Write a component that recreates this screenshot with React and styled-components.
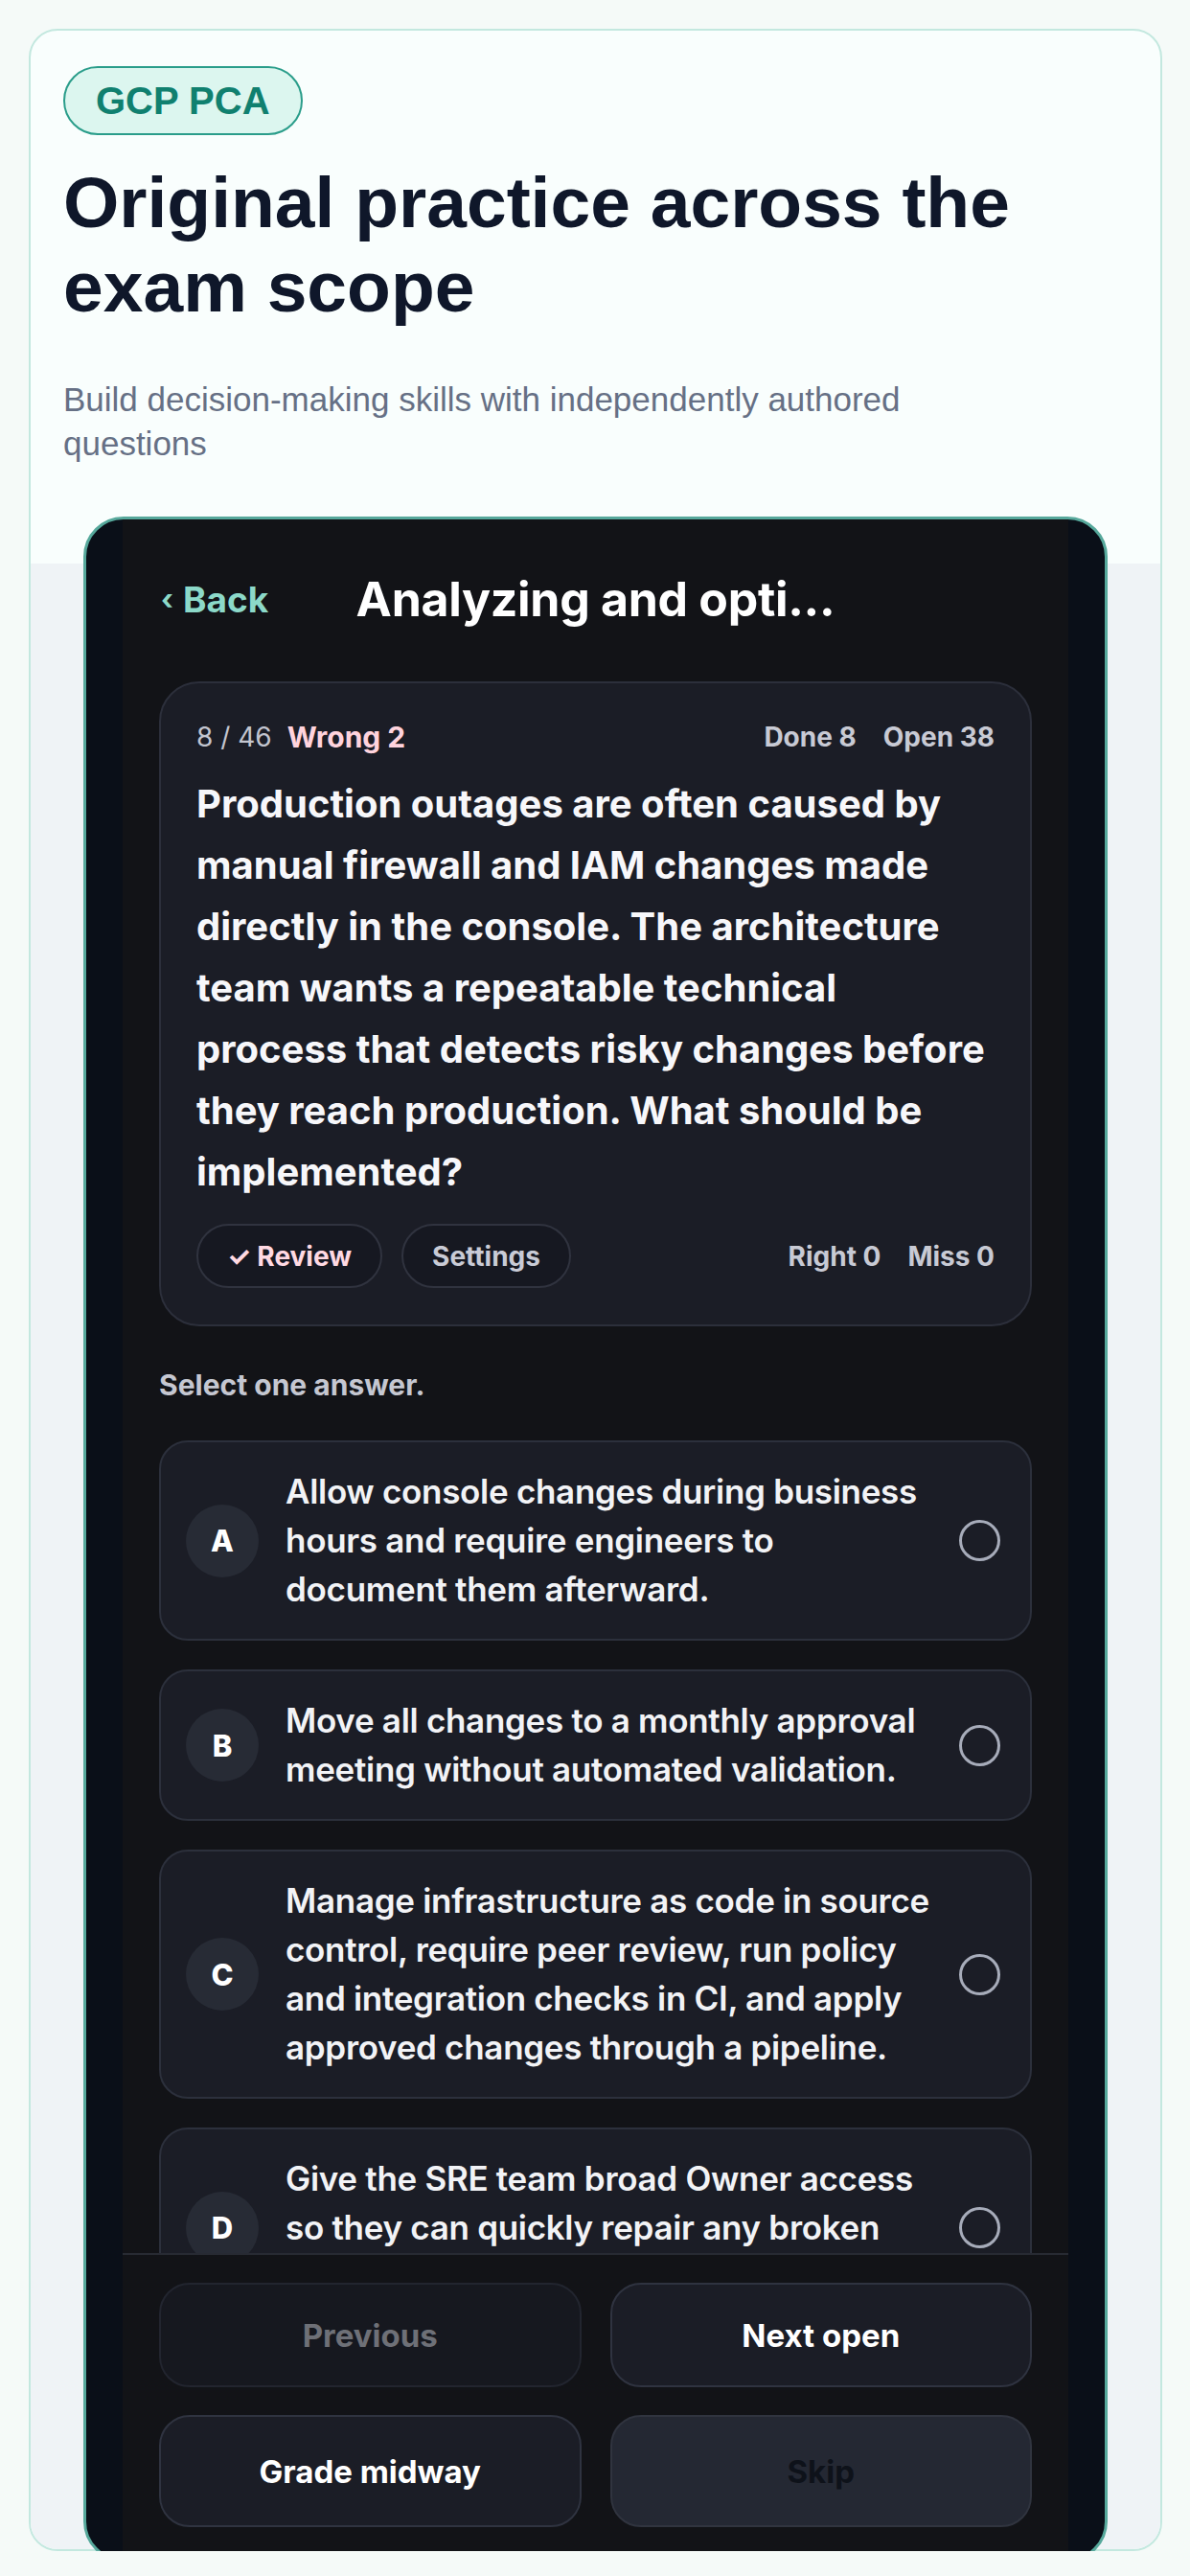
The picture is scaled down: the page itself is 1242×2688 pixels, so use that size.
import styled, { createGlobalStyle } from "styled-components";

const GlobalStyle = createGlobalStyle`
  html, body {
    margin: 0;
    padding: 0;
    background: #f5faf8;
  }

  * {
    box-sizing: border-box;
  }
`;

const Page = styled.div`
  padding: 30px 29px 0 30px;
  font-family: "Liberation Sans", Arial, sans-serif;
`;

const Card = styled.section`
  border: 2px solid #c3e8df;
  border-radius: 30px;
  background: #f9fefd;
  display: flex;
  flex-direction: column;
`;

const Hero = styled.div`
  padding: 37px 34px 102px;
  display: flex;
  flex-direction: column;
  align-items: flex-start;
`;

const Badge = styled.span`
  display: inline-block;
  padding: 10px 32px;
  border: 2px solid #2a9d8a;
  border-radius: 40px;
  background: #dcf6ef;
  color: #10806f;
  font-size: 40px;
  line-height: 48px;
  font-weight: 700;
`;

const Title = styled.h1`
  margin: 26px 0 0;
  font-size: 75px;
  line-height: 88px;
  font-weight: 700;
  color: #0f172a;
`;

const Subtitle = styled.p`
  margin: 51px 0 0;
  max-width: 920px;
  font-size: 35px;
  line-height: 46px;
  color: #667085;
`;

const Preview = styled.div`
  background: #eff3f6;
  border-radius: 0 0 28px 28px;
  padding: 0 55px;
  display: flex;
  flex-direction: column;
`;

const Phone = styled.div`
  margin: -49px 0 -13px;
  height: 2134px;
  border: 3px solid #56a89b;
  border-radius: 42px;
  background: #0a0f18;
  padding: 0 38px;
  overflow: hidden;
  display: flex;
  font-family: Inter, "Noto Sans", sans-serif;
`;

const Screen = styled.div`
  flex: 1;
  background: #121317;
  display: flex;
  flex-direction: column;
  min-width: 0;
`;

const Body = styled.div`
  flex: 1;
  overflow: hidden;
  padding: 53px 38px 0;
  display: flex;
  flex-direction: column;
`;

const Header = styled.div`
  height: 80px;
  display: grid;
  grid-template-columns: 1fr auto 1fr;
  align-items: center;
`;

const BackLink = styled.a`
  color: #8cd9c9;
  font-size: 37px;
  font-weight: 700;
  display: flex;
  align-items: center;
  gap: 10px;
  padding-left: 2px;

  span {
    font-size: 30px;
  }
`;

const ScreenTitle = styled.h2`
  margin: 0;
  color: #ffffff;
  font-size: 50px;
  font-weight: 700;
  letter-spacing: -0.3px;
  white-space: nowrap;
`;

const QuestionCard = styled.div`
  margin-top: 56px;
  border: 2px solid #2c2f3b;
  border-radius: 42px;
  background: #1b1d26;
  padding: 38px 37px;
  display: flex;
  flex-direction: column;
  gap: 20px;
`;

const MetaRow = styled.div`
  display: flex;
  justify-content: space-between;
  align-items: center;
  line-height: 36px;
`;

const MetaGroup = styled.div`
  display: flex;
  align-items: center;
  gap: ${(p) => p.$gap || 16}px;
`;

const Count = styled.span`
  color: #c3c5cf;
  font-size: 28px;
  font-weight: 400;
`;

const Stat = styled.span`
  color: ${(p) => (p.$pink ? "#ffd3dd" : "#c8cad4")};
  font-size: ${(p) => (p.$pink ? 30 : 28)}px;
  font-weight: 700;
`;

const QuestionText = styled.p`
  margin: 0;
  color: #f7f7fa;
  font-size: 40px;
  line-height: 64px;
  font-weight: 700;
`;

const CardFooter = styled.div`
  margin-top: 2px;
  display: flex;
  justify-content: space-between;
  align-items: center;
`;

const Pill = styled.button`
  height: 67px;
  padding: 0 30px;
  border: 2px solid #30333f;
  border-radius: 34px;
  background: #161821;
  color: ${(p) => (p.$pink ? "#ffd9e3" : "#c9cbd6")};
  font-family: inherit;
  font-size: 28px;
  font-weight: 700;
`;

const SelectHint = styled.p`
  margin: 43px 0 0;
  color: #c5c7d1;
  font-size: 30px;
  line-height: 36px;
  font-weight: 700;
`;

const Options = styled.div`
  margin-top: 40px;
  display: flex;
  flex-direction: column;
  gap: 30px;
`;

const Option = styled.div`
  border: 2px solid #2c303c;
  border-radius: 30px;
  background: #1b1d26;
  padding: 26px 31px 26px 26px;
  display: flex;
  align-items: center;
  gap: 28px;
`;

const Letter = styled.span`
  flex: none;
  width: 76px;
  height: 76px;
  border-radius: 50%;
  background: #272b35;
  color: #ffffff;
  font-size: 31px;
  font-weight: 800;
  display: flex;
  align-items: center;
  justify-content: center;
`;

const OptionText = styled.span`
  flex: 1;
  color: #f2f3f6;
  font-size: 35px;
  line-height: 51px;
  font-weight: 600;
  letter-spacing: -0.3px;
`;

const Radio = styled.span`
  flex: none;
  width: 43px;
  height: 43px;
  border-radius: 50%;
  border: 3px solid #a7acba;
`;

const Footer = styled.div`
  border-top: 2px solid #272a33;
  padding: 29px 38px 33px;
  display: grid;
  grid-template-columns: 1fr 1fr;
  gap: 29px 30px;
`;

const variants = {
  disabled: { bg: "#16181f", border: "#22252f", color: "#6e7077" },
  normal: { bg: "#1b1d26", border: "#2f3340", color: "#ffffff" },
  muted: { bg: "#242833", border: "#30343f", color: "#0e121a" },
};

const NavButton = styled.button`
  height: ${(p) => p.$h}px;
  border-radius: 32px;
  border: 2px solid ${(p) => variants[p.$variant].border};
  background: ${(p) => variants[p.$variant].bg};
  color: ${(p) => variants[p.$variant].color};
  font-family: inherit;
  font-size: 33px;
  font-weight: 700;
`;

const options = [
  {
    letter: "A",
    text: "Allow console changes during business hours and require engineers to document them afterward.",
  },
  {
    letter: "B",
    text: "Move all changes to a monthly approval meeting without automated validation.",
  },
  {
    letter: "C",
    text: "Manage infrastructure as code in source control, require peer review, run policy and integration checks in CI, and apply approved changes through a pipeline.",
  },
  {
    letter: "D",
    text: "Give the SRE team broad Owner access so they can quickly repair any broken resources in production.",
  },
];

const App = () => {
  return (
    <Page>
      <GlobalStyle />
      <Card>
        <Hero>
          <Badge>GCP PCA</Badge>
          <Title>Original practice across the exam scope</Title>
          <Subtitle>
            Build decision-making skills with independently authored questions
          </Subtitle>
        </Hero>
        <Preview>
          <Phone>
            <Screen>
              <Body>
                <Header>
                  <BackLink>
                    <span>‹</span>Back
                  </BackLink>
                  <ScreenTitle>Analyzing and opti...</ScreenTitle>
                  <div />
                </Header>

                <QuestionCard>
                  <MetaRow>
                    <MetaGroup>
                      <Count>8 / 46</Count>
                      <Stat $pink>Wrong 2</Stat>
                    </MetaGroup>
                    <MetaGroup $gap={28}>
                      <Stat>Done 8</Stat>
                      <Stat>Open 38</Stat>
                    </MetaGroup>
                  </MetaRow>
                  <QuestionText>
                    Production outages are often caused by manual firewall and
                    IAM changes made directly in the console. The architecture
                    team wants a repeatable technical process that detects
                    risky changes before they reach production. What should be
                    implemented?
                  </QuestionText>
                  <CardFooter>
                    <MetaGroup $gap={20}>
                      <Pill $pink>✓ Review</Pill>
                      <Pill>Settings</Pill>
                    </MetaGroup>
                    <MetaGroup $gap={28}>
                      <Stat>Right 0</Stat>
                      <Stat>Miss 0</Stat>
                    </MetaGroup>
                  </CardFooter>
                </QuestionCard>

                <SelectHint>Select one answer.</SelectHint>

                <Options>
                  {options.map((o) => (
                    <Option key={o.letter}>
                      <Letter>{o.letter}</Letter>
                      <OptionText>{o.text}</OptionText>
                      <Radio />
                    </Option>
                  ))}
                </Options>
              </Body>

              <Footer>
                <NavButton $variant="disabled" $h={109}>
                  Previous
                </NavButton>
                <NavButton $variant="normal" $h={109}>
                  Next open
                </NavButton>
                <NavButton $variant="normal" $h={117}>
                  Grade midway
                </NavButton>
                <NavButton $variant="muted" $h={117}>
                  Skip
                </NavButton>
              </Footer>
            </Screen>
          </Phone>
        </Preview>
      </Card>
    </Page>
  );
};

export default App;
